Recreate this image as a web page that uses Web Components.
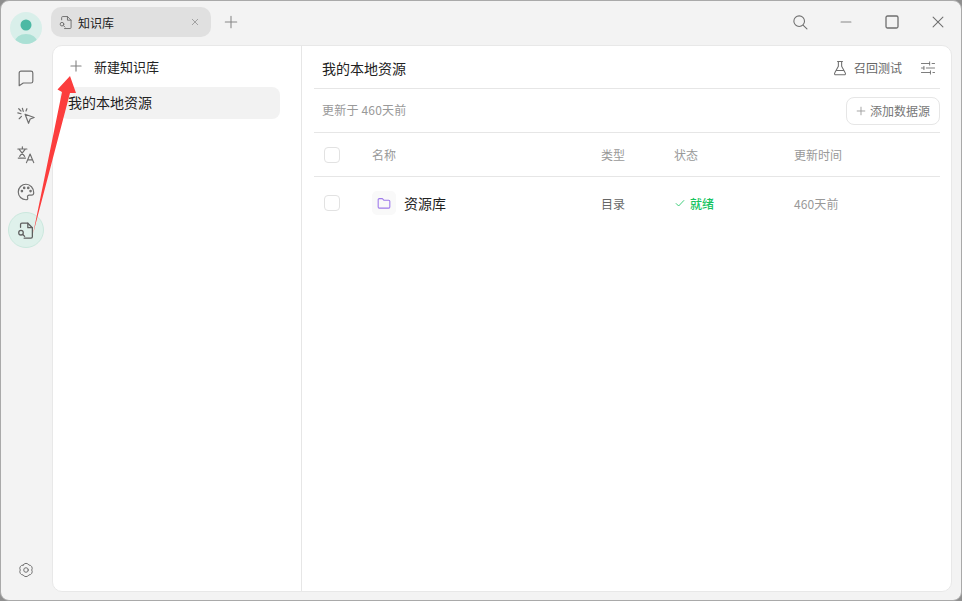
<!DOCTYPE html>
<html lang="zh">
<head>
<meta charset="utf-8">
<title>知识库</title>
<style>
html, body { margin: 0; height: 100%; background: #8f8f8f; overflow: hidden; }
body { font-family: "Noto Sans CJK SC", "Noto Sans", sans-serif; color: #222; }
</style>
</head>
<body>
<app-window></app-window>
<script>
const ICONS = {
    chat: '<path d="M3.500 5.500a2 2 0 0 1 2-2h11a2 2 0 0 1 2 2v9a2 2 0 0 1-2 2H8l-4.500 3z"/>',
    spark: '<path d="M10 9l10 3.600-4.400 1.700-1.800 4.700z"/><path d="M7 2.500l1 3.500M2 7.500l3.500 1M3 3l2.500 2.500M3.500 14l2.500-2.500M12 3l-1 2.500"/>',
    translate: '<path d="M2 5.500h10M7 3v2.500M3.500 6l6 7.500M10 6l-6 7.500M2.500 15.500h8"/><path d="M11.500 20.500l4-9.500 4 9.500M13 17.500h5"/>',
    palette: '<path d="M11 2.500a8.500 8.500 0 1 0 0 17c1.800 0 2.300-1.200 1.800-2.300-.6-1.400.2-2.700 1.700-2.700h2.500c1.500 0 2.500-1 2.500-2.700 0-5.200-3.800-9.300-8.500-9.300z"/><circle cx="6.500" cy="10" r=".8"/><circle cx="9" cy="6.500" r=".8"/><circle cx="13.500" cy="6.500" r=".8"/><circle cx="16" cy="10" r=".8"/>',
    doc: '<path d="M5 8V5a1.500 1.500 0 0 1 1.500-1.500H13L18 8.500v10a1.500 1.500 0 0 1-1.500 1.500H9"/><path d="M13 3.500V8.500h5"/><circle cx="5.500" cy="14" r="2.500"/><path d="M7.500 16l2 2"/>',
    gear: '<path d="M7.500 4.940A4 4 0 0 1 14.500 4.940 4 4 0 0 1 18 11 4 4 0 0 1 14.500 17.060 4 4 0 0 1 7.500 17.060 4 4 0 0 1 4 11 4 4 0 0 1 7.500 4.940z"/><circle cx="11" cy="11" r="2.800"/>',
    plus: '<path d="M11 4v14M4 11h14"/>',
    close: '<path d="M5 5l12 12M17 5L5 17"/>',
    search: '<circle cx="10" cy="10" r="6.500"/><path d="M15 15l4.500 4.500"/>',
    min: '<path d="M5 11h12"/>',
    max: '<rect x="5" y="5" width="12" height="12" rx="1.500"/>',
    flask: '<path d="M8 3h6M9 3v6L4.500 17a1.500 1.500 0 0 0 1.300 2.300h10.400a1.500 1.500 0 0 0 1.300-2.300L13 9V3M6.800 14h8.400"/>',
    sliders: '<path d="M3 5.500h10M16 5.500h3M13 3.500v4M3 11h3M9 11h10M6 9v4M3 16.500h11M17 16.500h2M14 14.500v4"/>',
    folder: '<path d="M3 6.500A1.500 1.500 0 0 1 4.500 5h4.200l2 2.200h6.800A1.500 1.500 0 0 1 19 8.700v7.800a1.500 1.500 0 0 1-1.500 1.500h-13A1.500 1.500 0 0 1 3 16.500z"/>',
    check: '<path d="M4 12l4.500 4.500L18 6.500"/>'
};

// one icon from the table above, size and colour come from attributes
class UiIcon extends HTMLElement {
    connectedCallback() {
        const size = this.getAttribute("size") || 18;
        const sw = this.getAttribute("stroke") || 1.5;
        const color = this.getAttribute("color") || "#6f6f6f";
        this.attachShadow({ mode: "open" }).innerHTML = `
        <style>
            :host { display: inline-flex; align-items: center; justify-content: center; flex: none; }
            svg { display: block; }
        </style>
        <svg width="${size}" height="${size}" viewBox="0 0 22 22" fill="none" stroke="${color}"
             stroke-width="${sw}" stroke-linecap="round" stroke-linejoin="round">${ICONS[this.getAttribute("name")]}</svg>`;
    }
}
customElements.define("ui-icon", UiIcon);

class AppAvatar extends HTMLElement {
    connectedCallback() {
        this.attachShadow({ mode: "open" }).innerHTML = `
        <style>
            :host { display: block; width: 32px; height: 32px; border-radius: 50%; overflow: hidden; background: #d9efea; }
            svg { display: block; }
        </style>
        <svg width="32" height="32" viewBox="0 0 32 32">
            <ellipse cx="16" cy="30" rx="11" ry="8" fill="#abe0d5"/>
            <circle cx="16" cy="13" r="5.500" fill="#4cb9a4"/>
        </svg>`;
    }
}
customElements.define("app-avatar", AppAvatar);

class SideRail extends HTMLElement {
    connectedCallback() {
        this.attachShadow({ mode: "open" }).innerHTML = `
        <style>
            :host { display: flex; flex-direction: column; align-items: center; width: 51px; flex: none; padding: 11px 1px 21px 0; box-sizing: border-box; }
            .items { display: flex; flex-direction: column; align-items: center; margin-top: 15px; flex: 1; }
            .item { width: 36px; height: 38px; display: flex; align-items: center; justify-content: center; }
            .active { height: 36px; margin-top: 1px; background: #dff1eb; border: 1px solid #cbe8de; border-radius: 50%; box-sizing: border-box; }
        </style>
        <app-avatar></app-avatar>
        <div class="items">
            <div class="item"><ui-icon name="chat" size="20" stroke="1.300"></ui-icon></div>
            <div class="item"><ui-icon name="spark" size="20" stroke="1.300"></ui-icon></div>
            <div class="item"><ui-icon name="translate" size="20" stroke="1.300"></ui-icon></div>
            <div class="item"><ui-icon name="palette" size="20" stroke="1.300"></ui-icon></div>
            <div class="item active"><ui-icon name="doc" size="20" stroke="1.400" color="#5f5f5f"></ui-icon></div>
        </div>
        <ui-icon name="gear" size="18" stroke="1.200"></ui-icon>`;
    }
}
customElements.define("side-rail", SideRail);

class TitleBar extends HTMLElement {
    connectedCallback() {
        this.attachShadow({ mode: "open" }).innerHTML = `
        <style>
            :host { display: flex; align-items: center; height: 30px; margin-top: 6px; margin-left: -1px; flex: none; }
            .tab { display: flex; align-items: center; width: 160px; height: 30px; box-sizing: border-box; padding: 0 11px 0 7px; background: #e0e0e0; border-radius: 10px; font-size: 12px; color: #222; }
            .tab span { margin-left: 4px; flex: 1; }
            .new { margin-left: 11px; }
            .space { flex: 1; }
            .ctl { width: 46px; display: flex; justify-content: center; }
        </style>
        <div class="tab">
            <ui-icon name="doc" size="16" stroke="1.300"></ui-icon>
            <span>知识库</span>
            <ui-icon name="close" size="10" stroke="1.600" color="#8a8a8a"></ui-icon>
        </div>
        <ui-icon class="new" name="plus" size="18" stroke="1.300" color="#888"></ui-icon>
        <div class="space"></div>
        <div class="ctl"><ui-icon name="search" size="18" stroke="1.300"></ui-icon></div>
        <div class="ctl"><ui-icon name="min" size="18" stroke="1.400" color="#888"></ui-icon></div>
        <div class="ctl"><ui-icon name="max" size="22" stroke="1.300"></ui-icon></div>
        <div class="ctl"><ui-icon name="close" size="18" stroke="1.300"></ui-icon></div>`;
    }
}
customElements.define("title-bar", TitleBar);

class KbList extends HTMLElement {
    connectedCallback() {
        this.attachShadow({ mode: "open" }).innerHTML = `
        <style>
            :host { display: flex; flex-direction: column; width: 249px; flex: none; box-sizing: border-box; border-right: 1px solid #e6e6e6; padding: 6px 21px 0 7px; }
            .add { display: flex; align-items: center; height: 28px; padding-left: 8px; font-size: 13px; color: #222; }
            .add span { margin-left: 10px; }
            .row { display: flex; align-items: center; height: 32px; box-sizing: border-box; padding: 0 0 2px 8px; margin-top: 7px; background: #f2f2f2; border-radius: 8px; font-size: 14px; color: #222; }
        </style>
        <div class="add"><ui-icon name="plus" size="16" stroke="1.500" color="#808080"></ui-icon><span>新建知识库</span></div>
        <div class="row">我的本地资源</div>`;
    }
}
customElements.define("kb-list", KbList);

class KbDetail extends HTMLElement {
    connectedCallback() {
        this.attachShadow({ mode: "open" }).innerHTML = `
        <style>
            :host { display: flex; flex-direction: column; flex: 1; min-width: 0; padding: 0 11px 0 12px; }
            .head { display: flex; align-items: center; height: 41px; padding: 1px 0 0 8px; border-bottom: 1px solid #e6e6e6; flex: none; font-size: 14px; color: #222; }
            .head .title { flex: 1; }
            .test { display: flex; align-items: center; gap: 5px; font-size: 12px; color: #666; margin-right: 17px; }
            .tune { margin-right: 3px; }
            .sub { display: flex; align-items: center; justify-content: space-between; height: 43px; padding-left: 8px; border-bottom: 1px solid #e6e6e6; flex: none; font-size: 12px; color: #999; }
            .sub span { margin-top: -2px; letter-spacing: .2px; }
            button { display: flex; align-items: center; gap: 3px; width: 94px; height: 28px; box-sizing: border-box; padding: 0 0 0 8px; background: #fff; border: 1px solid #e6e6e6; border-radius: 8px; font: inherit; color: #777; }
            .grid { display: grid; grid-template-columns: 48px 229px 73px 120px 1fr; align-items: center; padding-left: 10px; flex: none; font-size: 12px; }
            .th { height: 43px; border-bottom: 1px solid #e6e6e6; color: #999; }
            .td { height: 52px; color: #666; }
            .box { width: 16px; height: 16px; box-sizing: border-box; border: 1px solid #e2e2e2; border-radius: 4px; }
            .name { display: flex; align-items: center; gap: 8px; font-size: 14px; color: #222; }
            .fold { width: 24px; height: 24px; display: flex; align-items: center; justify-content: center; background: #f9f9f9; border-radius: 5px; }
            .ok { display: flex; align-items: center; gap: 4px; color: #16c45f; font-weight: 500; }
            .time { color: #999; letter-spacing: .1px; }
        </style>
        <div class="head">
            <span class="title">我的本地资源</span>
            <span class="test"><ui-icon name="flask" size="18" stroke="1.300"></ui-icon>召回测试</span>
            <ui-icon class="tune" name="sliders" size="18" stroke="1.100"></ui-icon>
        </div>
        <div class="sub">
            <span>更新于 460天前</span>
            <button><ui-icon name="plus" size="12" stroke="1.600" color="#999"></ui-icon>添加数据源</button>
        </div>
        <div class="grid th">
            <div class="box"></div><span>名称</span><span>类型</span><span>状态</span><span>更新时间</span>
        </div>
        <div class="grid td">
            <div class="box"></div>
            <div class="name"><div class="fold"><ui-icon name="folder" size="16" stroke="1.500" color="#9f7aea"></ui-icon></div>资源库</div>
            <span>目录</span>
            <div class="ok"><ui-icon name="check" size="12" stroke="1.500" color="#16c45f"></ui-icon>就绪</div>
            <span class="time">460天前</span>
        </div>`;
    }
}
customElements.define("kb-detail", KbDetail);

// the red annotation arrow lies over everything else
class RedArrow extends HTMLElement {
    connectedCallback() {
        this.attachShadow({ mode: "open" }).innerHTML = `
        <style>
            :host { position: absolute; left: -1px; top: -1px; pointer-events: none; }
            svg { display: block; }
        </style>
        <svg width="120" height="260" viewBox="0 0 120 260">
            <path d="M33 234L62 92 57.500 89.500 70 76 76 93 70 93z" fill="#fc3d3d"/>
        </svg>`;
    }
}
customElements.define("red-arrow", RedArrow);

class AppWindow extends HTMLElement {
    connectedCallback() {
        this.attachShadow({ mode: "open" }).innerHTML = `
        <style>
            :host { display: flex; position: relative; width: 962px; height: 601px; box-sizing: border-box; background: #f3f3f3; border: 1px solid #a9a9a9; border-radius: 9px; overflow: hidden; font-family: "Noto Sans CJK SC", "Noto Sans", sans-serif; }
            .main { flex: 1; display: flex; flex-direction: column; min-width: 0; }
            .panel { display: flex; flex: none; height: 547px; margin: 8px 9px 0 0; background: #fff; border: 1px solid #e8e8e8; border-radius: 10px; box-sizing: border-box; }
        </style>
        <side-rail></side-rail>
        <div class="main">
            <title-bar></title-bar>
            <div class="panel">
                <kb-list></kb-list>
                <kb-detail></kb-detail>
            </div>
        </div>
        <red-arrow></red-arrow>`;
    }
}
customElements.define("app-window", AppWindow);
</script>
</body>
</html>
